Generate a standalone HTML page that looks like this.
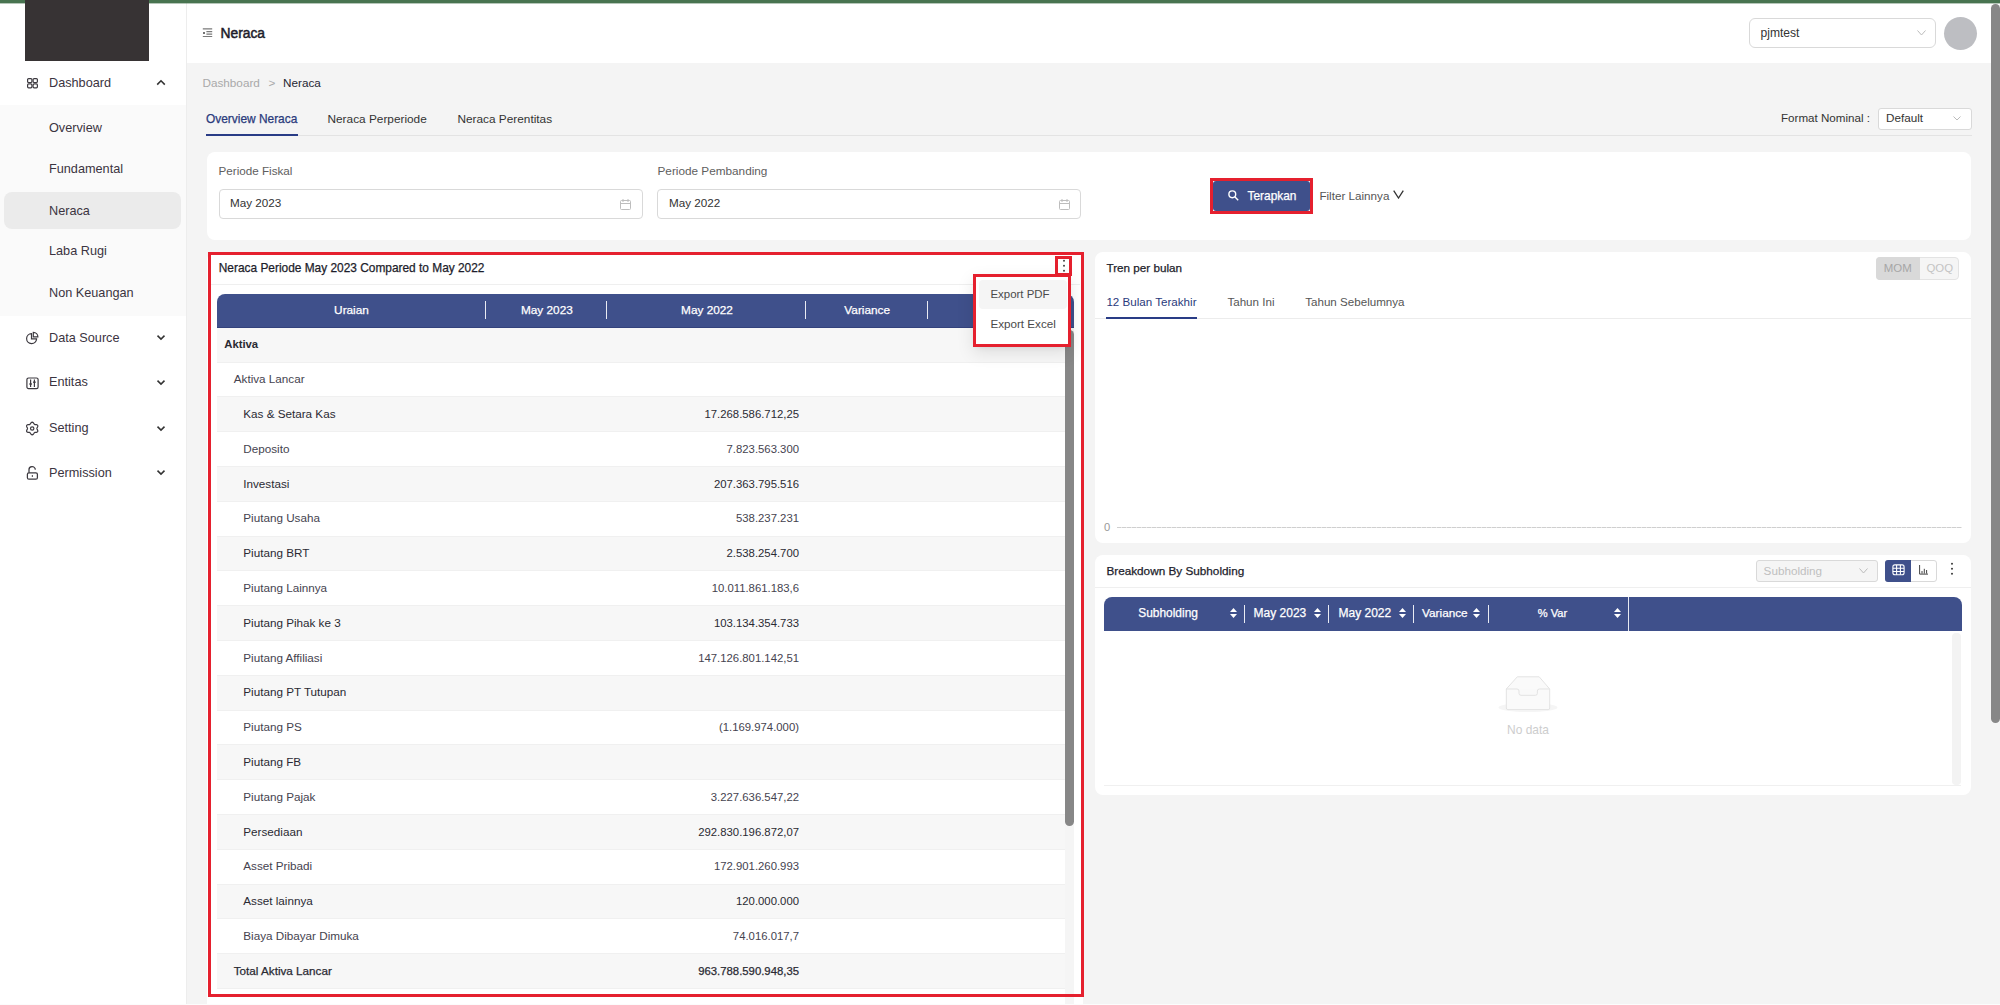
<!DOCTYPE html>
<html><head><meta charset="utf-8">
<style>
*{box-sizing:border-box;margin:0;padding:0}
html,body{width:2000px;height:1005px;overflow:hidden;background:#f4f4f4;font-family:"Liberation Sans",sans-serif;color:#333}
.a{position:absolute}
.t{position:absolute;white-space:nowrap}
.md{-webkit-text-stroke:0.25px currentColor}
</style></head><body>
<div class="a" style="left:0px;top:0px;width:2000px;height:3px;background:#487450"></div>
<div class="a" style="left:0px;top:3px;width:187px;height:1002px;background:#fff;border-right:1px solid #ededed"></div>
<div class="a" style="left:25px;top:0px;width:124px;height:61px;background:#373334"></div>
<div class="a" style="left:0px;top:105px;width:186px;height:211px;background:#fafafa"></div>
<div class="a" style="left:4px;top:192px;width:177px;height:37px;background:#ebebeb;border-radius:8px"></div>
<div class="t " style="left:49px;top:72.50px;font-size:12.7px;color:#3b3441;line-height:20px;height:20px;">Dashboard</div>
<div class="t " style="left:49px;top:118.00px;font-size:12.7px;color:#3b3441;line-height:20px;height:20px;">Overview</div>
<div class="t " style="left:49px;top:158.50px;font-size:12.7px;color:#3b3441;line-height:20px;height:20px;">Fundamental</div>
<div class="t " style="left:49px;top:200.50px;font-size:12.7px;color:#3b3441;line-height:20px;height:20px;">Neraca</div>
<div class="t " style="left:49px;top:241.00px;font-size:12.7px;color:#3b3441;line-height:20px;height:20px;">Laba Rugi</div>
<div class="t " style="left:49px;top:282.50px;font-size:12.7px;color:#3b3441;line-height:20px;height:20px;">Non Keuangan</div>
<div class="t " style="left:49px;top:327.60px;font-size:12.7px;color:#3b3441;line-height:20px;height:20px;">Data Source</div>
<div class="t " style="left:49px;top:372.40px;font-size:12.7px;color:#3b3441;line-height:20px;height:20px;">Entitas</div>
<div class="t " style="left:49px;top:418.20px;font-size:12.7px;color:#3b3441;line-height:20px;height:20px;">Setting</div>
<div class="t " style="left:49px;top:462.90px;font-size:12.7px;color:#3b3441;line-height:20px;height:20px;">Permission</div>
<svg class="a" style="left:26px;top:77px;" width="13" height="12" viewBox="0 0 13 12"><g fill="none" stroke="#3d3a40" stroke-width="1.2"><rect x="1.6" y="1.6" width="4.3" height="3.9" rx="1"/><rect x="7.1" y="1.6" width="4.3" height="3.9" rx="1"/><rect x="1.6" y="6.9" width="4.3" height="3.9" rx="1"/><rect x="7.1" y="6.9" width="4.3" height="3.9" rx="1"/></g></svg>
<svg class="a" style="left:156px;top:79px;" width="10" height="7" viewBox="0 0 10 7"><path d="M1.2 5.6 L5 1.8 L8.8 5.6" fill="none" stroke="#333" stroke-width="1.6"/></svg>
<svg class="a" style="left:156px;top:334px;" width="10" height="7" viewBox="0 0 10 7"><path d="M1.5 1.6 L5 5.1 L8.5 1.6" fill="none" stroke="#333" stroke-width="1.5"/></svg>
<svg class="a" style="left:156px;top:379px;" width="10" height="7" viewBox="0 0 10 7"><path d="M1.5 1.6 L5 5.1 L8.5 1.6" fill="none" stroke="#333" stroke-width="1.5"/></svg>
<svg class="a" style="left:156px;top:425px;" width="10" height="7" viewBox="0 0 10 7"><path d="M1.5 1.6 L5 5.1 L8.5 1.6" fill="none" stroke="#333" stroke-width="1.5"/></svg>
<svg class="a" style="left:156px;top:469px;" width="10" height="7" viewBox="0 0 10 7"><path d="M1.5 1.6 L5 5.1 L8.5 1.6" fill="none" stroke="#333" stroke-width="1.5"/></svg>
<svg class="a" style="left:25px;top:331px;" width="15" height="15" viewBox="0 0 15 15"><g fill="none" stroke="#3d3a40" stroke-width="1.2"><path d="M6.5 2.6 A5 5 0 1 0 11.6 7.9 L6.5 7.9 Z"/><path d="M8.3 1.3 A4.6 4.6 0 0 1 12.9 5.9 L8.3 5.9 Z"/></g></svg>
<svg class="a" style="left:26px;top:377px;" width="13" height="13" viewBox="0 0 13 13"><g fill="none" stroke="#3d3a40" stroke-width="1.2"><rect x="0.9" y="1" width="11.2" height="10.6" rx="1.6"/><path d="M4.6 2.5v7.6M8.4 2.5v7.6"/></g><g fill="#3d3a40"><rect x="3.4" y="6.2" width="2.4" height="1.6"/><rect x="7.2" y="4.4" width="2.4" height="1.6"/></g></svg>
<svg class="a" style="left:25px;top:421px;" width="15" height="15" viewBox="0 0 15 15"><g fill="none" stroke="#3d3a40" stroke-width="1.2" stroke-linejoin="round"><path d="M11.90 7.50 L11.99 7.08 L12.22 6.61 L12.51 6.08 L12.74 5.48 L12.81 4.88 L12.66 4.35 L12.27 3.95 L11.72 3.71 L11.09 3.61 L10.48 3.59 L9.96 3.56 L9.55 3.43 L9.23 3.14 L8.94 2.71 L8.62 2.19 L8.22 1.69 L7.74 1.33 L7.20 1.20 L6.66 1.33 L6.18 1.69 L5.78 2.19 L5.46 2.71 L5.17 3.14 L4.85 3.43 L4.44 3.56 L3.92 3.59 L3.31 3.61 L2.68 3.71 L2.13 3.95 L1.74 4.35 L1.59 4.88 L1.66 5.48 L1.89 6.08 L2.18 6.61 L2.41 7.08 L2.50 7.50 L2.41 7.92 L2.18 8.39 L1.89 8.92 L1.66 9.52 L1.59 10.12 L1.74 10.65 L2.13 11.05 L2.68 11.29 L3.31 11.39 L3.92 11.41 L4.44 11.44 L4.85 11.57 L5.17 11.86 L5.46 12.29 L5.78 12.81 L6.18 13.31 L6.66 13.67 L7.20 13.80 L7.74 13.67 L8.22 13.31 L8.62 12.81 L8.94 12.29 L9.23 11.86 L9.55 11.57 L9.96 11.44 L10.48 11.41 L11.09 11.39 L11.72 11.29 L12.27 11.05 L12.66 10.65 L12.81 10.12 L12.74 9.52 L12.51 8.92 L12.22 8.39 L11.99 7.92 L11.90 7.50Z"/><circle cx="7.2" cy="7.5" r="1.7"/></g></svg>
<svg class="a" style="left:26px;top:466px;" width="13" height="14" viewBox="0 0 13 14"><g fill="none" stroke="#3d3a40" stroke-width="1.25"><rect x="1.4" y="6.8" width="10" height="6.4" rx="1.5"/><path d="M3 6.8 V4.2 A3.2 3.2 0 0 1 9.4 3.6"/><path d="M6.4 9.2v1.6"/></g></svg>
<div class="a" style="left:187px;top:3px;width:1813px;height:60px;background:#fff"></div>
<svg class="a" style="left:202px;top:27px;" width="11" height="11" viewBox="0 0 11 11"><g stroke="#7a7a7a" stroke-width="1.1"><path d="M0.8 1.9h9.4M4.4 4.6h5.8M4.4 7.1h5.8M0.8 9.5h9.4"/></g><circle cx="2" cy="5.9" r="1" fill="#444"/></svg>
<div class="t " style="left:220.5px;top:23.80px;font-size:13.8px;color:#1d1d2b;line-height:20px;height:20px;-webkit-text-stroke:0.5px #1d1d2b">Neraca</div>
<div class="a" style="left:1749px;top:18px;width:187px;height:30px;background:#fff;border:1px solid #d9d9d9;border-radius:6px"></div>
<div class="t " style="left:1760.5px;top:23.00px;font-size:12.1px;color:#333;line-height:20px;height:20px;">pjmtest</div>
<svg class="a" style="left:1917px;top:30px;" width="9" height="6" viewBox="0 0 9 6"><path d="M0.5 0.5 L4.5 5 L8.5 0.5" fill="none" stroke="#bbb" stroke-width="1"/></svg>
<div class="a" style="left:1944px;top:17px;width:33px;height:33px;background:#bdbec2;border-radius:50%"></div>
<div class="a" style="left:1990px;top:63px;width:10px;height:942px;background:#f4f4f4"></div>
<div class="a" style="left:1991px;top:4px;width:9px;height:719px;background:#878787;border-radius:5px"></div>
<div class="t " style="left:202.5px;top:73.00px;font-size:11.73px;color:#a9a9a9;line-height:20px;height:20px;">Dashboard</div>
<div class="t " style="left:268.5px;top:73.00px;font-size:11.73px;color:#a9a9a9;line-height:20px;height:20px;">&gt;</div>
<div class="t " style="left:283px;top:73.00px;font-size:11.73px;color:#262633;line-height:20px;height:20px;">Neraca</div>
<div class="a" style="left:206px;top:135px;width:1766px;height:1px;background:#e3e3e3"></div>
<div class="t md" style="left:206px;top:108.80px;font-size:11.92px;color:#2a3a7c;line-height:20px;height:20px;">Overview Neraca</div>
<div class="a" style="left:206px;top:134px;width:92px;height:2px;background:#293c86"></div>
<div class="t " style="left:327.5px;top:108.80px;font-size:11.83px;color:#333;line-height:20px;height:20px;">Neraca Perperiode</div>
<div class="t " style="left:457.5px;top:108.80px;font-size:11.82px;color:#333;line-height:20px;height:20px;">Neraca Perentitas</div>
<div class="t " style="right:130px;top:107.90px;font-size:11.61px;color:#333;line-height:20px;height:20px;">Format Nominal :</div>
<div class="a" style="left:1878px;top:108px;width:94px;height:22px;background:#fff;border:1px solid #d9d9d9;border-radius:3px"></div>
<div class="t " style="left:1886px;top:108.40px;font-size:11.7px;color:#333;line-height:20px;height:20px;">Default</div>
<svg class="a" style="left:1953px;top:116px;" width="8" height="5" viewBox="0 0 8 5"><path d="M0.5 0.5 L4 4 L7.5 0.5" fill="none" stroke="#bbb" stroke-width="1"/></svg>
<div class="a" style="left:207px;top:152px;width:1764px;height:88px;background:#fff;border-radius:8px"></div>
<div class="t " style="left:218.5px;top:160.80px;font-size:11.68px;color:#5e5e5e;line-height:20px;height:20px;">Periode Fiskal</div>
<div class="t " style="left:657.5px;top:160.80px;font-size:11.78px;color:#5e5e5e;line-height:20px;height:20px;">Periode Pembanding</div>
<div class="a" style="left:219px;top:189px;width:424px;height:30px;background:#fff;border:1px solid #d9d9d9;border-radius:4px"></div>
<div class="a" style="left:657px;top:189px;width:424px;height:30px;background:#fff;border:1px solid #d9d9d9;border-radius:4px"></div>
<div class="t " style="left:230px;top:193.20px;font-size:11.7px;color:#333;line-height:20px;height:20px;">May 2023</div>
<div class="t " style="left:669px;top:193.20px;font-size:11.7px;color:#333;line-height:20px;height:20px;">May 2022</div>
<svg class="a" style="left:620px;top:199px;" width="11" height="11" viewBox="0 0 11 11"><g fill="none" stroke="#bdbdbd" stroke-width="1"><rect x="0.5" y="1.5" width="10" height="9" rx="1"/><path d="M0.5 4.5h10M3 0v3M8 0v3"/></g></svg>
<svg class="a" style="left:1059px;top:199px;" width="11" height="11" viewBox="0 0 11 11"><g fill="none" stroke="#bdbdbd" stroke-width="1"><rect x="0.5" y="1.5" width="10" height="9" rx="1"/><path d="M0.5 4.5h10M3 0v3M8 0v3"/></g></svg>
<div class="a" style="left:1210px;top:178px;width:103px;height:36px;border:3px solid #e5202e"></div>
<div class="a" style="left:1213px;top:181px;width:97px;height:30px;background:#3f508b;border-radius:3px"></div>
<svg class="a" style="left:1228px;top:190px;" width="11" height="11" viewBox="0 0 11 11"><g fill="none" stroke="#fff" stroke-width="1.4"><circle cx="4.3" cy="4.3" r="3.4"/><path d="M6.8 6.8 L10.2 10.2"/></g></svg>
<div class="t md" style="left:1247.5px;top:185.50px;font-size:11.91px;color:#fff;line-height:20px;height:20px;">Terapkan</div>
<div class="t " style="left:1319.4px;top:185.50px;font-size:11.66px;color:#555;line-height:20px;height:20px;">Filter Lainnya</div>
<svg class="a" style="left:1393px;top:190px;" width="11" height="9" viewBox="0 0 11 9"><path d="M0.7 0.7 L5.5 8 L10.3 0.7" fill="none" stroke="#333" stroke-width="1.3"/></svg>
<div class="a" style="left:207px;top:252px;width:876px;height:753px;background:#fff;border-radius:8px 8px 0 0"></div>
<div class="t md" style="left:218.75px;top:257.50px;font-size:11.9px;color:#1d1d2b;line-height:20px;height:20px;">Neraca Periode May 2023 Compared to May 2022</div>
<div class="a" style="left:211px;top:284px;width:869px;height:1px;background:#efefef"></div>
<div class="a" style="left:217px;top:294px;width:857px;height:34px;background:#3f508b;border-radius:8px 8px 0 0;border-bottom:1px solid #33427c"></div>
<div class="t md" style="left:251.50px;width:200px;text-align:center;top:300.00px;font-size:11.8px;color:#fff;line-height:20px;height:20px;">Uraian</div>
<div class="t md" style="left:446.90px;width:200px;text-align:center;top:300.00px;font-size:11.8px;color:#fff;line-height:20px;height:20px;">May 2023</div>
<div class="t md" style="left:607.00px;width:200px;text-align:center;top:300.00px;font-size:11.8px;color:#fff;line-height:20px;height:20px;">May 2022</div>
<div class="t md" style="left:767.20px;width:200px;text-align:center;top:300.00px;font-size:11.8px;color:#fff;line-height:20px;height:20px;">Variance</div>
<div class="a" style="left:485px;top:301px;width:1px;height:18px;background:#e9ebf3"></div>
<div class="a" style="left:606px;top:301px;width:1px;height:18px;background:#e9ebf3"></div>
<div class="a" style="left:805px;top:301px;width:1px;height:18px;background:#e9ebf3"></div>
<div class="a" style="left:927px;top:301px;width:1px;height:18px;background:#e9ebf3"></div>
<div class="a" style="left:217px;top:327.80px;width:847.5px;height:34.80px;background:#f7f7f7;border-bottom:1px solid #f0f0f0"></div>
<div class="a" style="left:217px;top:362.60px;width:847.5px;height:34.80px;background:#fff;border-bottom:1px solid #f0f0f0"></div>
<div class="a" style="left:217px;top:397.40px;width:847.5px;height:34.80px;background:#f7f7f7;border-bottom:1px solid #f0f0f0"></div>
<div class="a" style="left:217px;top:432.20px;width:847.5px;height:34.80px;background:#fff;border-bottom:1px solid #f0f0f0"></div>
<div class="a" style="left:217px;top:467.00px;width:847.5px;height:34.80px;background:#f7f7f7;border-bottom:1px solid #f0f0f0"></div>
<div class="a" style="left:217px;top:501.80px;width:847.5px;height:34.80px;background:#fff;border-bottom:1px solid #f0f0f0"></div>
<div class="a" style="left:217px;top:536.60px;width:847.5px;height:34.80px;background:#f7f7f7;border-bottom:1px solid #f0f0f0"></div>
<div class="a" style="left:217px;top:571.40px;width:847.5px;height:34.80px;background:#fff;border-bottom:1px solid #f0f0f0"></div>
<div class="a" style="left:217px;top:606.20px;width:847.5px;height:34.80px;background:#f7f7f7;border-bottom:1px solid #f0f0f0"></div>
<div class="a" style="left:217px;top:641.00px;width:847.5px;height:34.80px;background:#fff;border-bottom:1px solid #f0f0f0"></div>
<div class="a" style="left:217px;top:675.80px;width:847.5px;height:34.80px;background:#f7f7f7;border-bottom:1px solid #f0f0f0"></div>
<div class="a" style="left:217px;top:710.60px;width:847.5px;height:34.80px;background:#fff;border-bottom:1px solid #f0f0f0"></div>
<div class="a" style="left:217px;top:745.40px;width:847.5px;height:34.80px;background:#f7f7f7;border-bottom:1px solid #f0f0f0"></div>
<div class="a" style="left:217px;top:780.20px;width:847.5px;height:34.80px;background:#fff;border-bottom:1px solid #f0f0f0"></div>
<div class="a" style="left:217px;top:815.00px;width:847.5px;height:34.80px;background:#f7f7f7;border-bottom:1px solid #f0f0f0"></div>
<div class="a" style="left:217px;top:849.80px;width:847.5px;height:34.80px;background:#fff;border-bottom:1px solid #f0f0f0"></div>
<div class="a" style="left:217px;top:884.60px;width:847.5px;height:34.80px;background:#f7f7f7;border-bottom:1px solid #f0f0f0"></div>
<div class="a" style="left:217px;top:919.40px;width:847.5px;height:34.80px;background:#fff;border-bottom:1px solid #f0f0f0"></div>
<div class="a" style="left:217px;top:954.20px;width:847.5px;height:34.80px;background:#f7f7f7;border-bottom:1px solid #f0f0f0"></div>
<div class="t " style="left:224.25px;top:334.40px;font-size:11.3px;color:#2a2a33;line-height:20px;height:20px;font-weight:bold">Aktiva</div>
<div class="t " style="left:233.75px;top:369.20px;font-size:11.7px;color:#45434f;line-height:20px;height:20px;">Aktiva Lancar</div>
<div class="t " style="left:243.25px;top:404.00px;font-size:11.7px;color:#2a2a33;line-height:20px;height:20px;">Kas &amp; Setara Kas</div>
<div class="t " style="right:1201px;top:404.00px;font-size:11.33px;color:#2a2a33;line-height:20px;height:20px;">17.268.586.712,25</div>
<div class="t " style="left:243.25px;top:438.80px;font-size:11.7px;color:#45434f;line-height:20px;height:20px;">Deposito</div>
<div class="t " style="right:1201px;top:438.80px;font-size:11.33px;color:#45434f;line-height:20px;height:20px;">7.823.563.300</div>
<div class="t " style="left:243.25px;top:473.60px;font-size:11.7px;color:#2a2a33;line-height:20px;height:20px;">Investasi</div>
<div class="t " style="right:1201px;top:473.60px;font-size:11.33px;color:#2a2a33;line-height:20px;height:20px;">207.363.795.516</div>
<div class="t " style="left:243.25px;top:508.40px;font-size:11.7px;color:#45434f;line-height:20px;height:20px;">Piutang Usaha</div>
<div class="t " style="right:1201px;top:508.40px;font-size:11.33px;color:#45434f;line-height:20px;height:20px;">538.237.231</div>
<div class="t " style="left:243.25px;top:543.20px;font-size:11.7px;color:#2a2a33;line-height:20px;height:20px;">Piutang BRT</div>
<div class="t " style="right:1201px;top:543.20px;font-size:11.33px;color:#2a2a33;line-height:20px;height:20px;">2.538.254.700</div>
<div class="t " style="left:243.25px;top:578.00px;font-size:11.7px;color:#45434f;line-height:20px;height:20px;">Piutang Lainnya</div>
<div class="t " style="right:1201px;top:578.00px;font-size:11.33px;color:#45434f;line-height:20px;height:20px;">10.011.861.183,6</div>
<div class="t " style="left:243.25px;top:612.80px;font-size:11.7px;color:#2a2a33;line-height:20px;height:20px;">Piutang Pihak ke 3</div>
<div class="t " style="right:1201px;top:612.80px;font-size:11.33px;color:#2a2a33;line-height:20px;height:20px;">103.134.354.733</div>
<div class="t " style="left:243.25px;top:647.60px;font-size:11.7px;color:#45434f;line-height:20px;height:20px;">Piutang Affiliasi</div>
<div class="t " style="right:1201px;top:647.60px;font-size:11.33px;color:#45434f;line-height:20px;height:20px;">147.126.801.142,51</div>
<div class="t " style="left:243.25px;top:682.40px;font-size:11.7px;color:#2a2a33;line-height:20px;height:20px;">Piutang PT Tutupan</div>
<div class="t " style="left:243.25px;top:717.20px;font-size:11.7px;color:#45434f;line-height:20px;height:20px;">Piutang PS</div>
<div class="t " style="right:1201px;top:717.20px;font-size:11.33px;color:#45434f;line-height:20px;height:20px;">(1.169.974.000)</div>
<div class="t " style="left:243.25px;top:752.00px;font-size:11.7px;color:#2a2a33;line-height:20px;height:20px;">Piutang FB</div>
<div class="t " style="left:243.25px;top:786.80px;font-size:11.7px;color:#45434f;line-height:20px;height:20px;">Piutang Pajak</div>
<div class="t " style="right:1201px;top:786.80px;font-size:11.33px;color:#45434f;line-height:20px;height:20px;">3.227.636.547,22</div>
<div class="t " style="left:243.25px;top:821.60px;font-size:11.7px;color:#2a2a33;line-height:20px;height:20px;">Persediaan</div>
<div class="t " style="right:1201px;top:821.60px;font-size:11.33px;color:#2a2a33;line-height:20px;height:20px;">292.830.196.872,07</div>
<div class="t " style="left:243.25px;top:856.40px;font-size:11.7px;color:#45434f;line-height:20px;height:20px;">Asset Pribadi</div>
<div class="t " style="right:1201px;top:856.40px;font-size:11.33px;color:#45434f;line-height:20px;height:20px;">172.901.260.993</div>
<div class="t " style="left:243.25px;top:891.20px;font-size:11.7px;color:#2a2a33;line-height:20px;height:20px;">Asset lainnya</div>
<div class="t " style="right:1201px;top:891.20px;font-size:11.33px;color:#2a2a33;line-height:20px;height:20px;">120.000.000</div>
<div class="t " style="left:243.25px;top:926.00px;font-size:11.7px;color:#45434f;line-height:20px;height:20px;">Biaya Dibayar Dimuka</div>
<div class="t " style="right:1201px;top:926.00px;font-size:11.33px;color:#45434f;line-height:20px;height:20px;">74.016.017,7</div>
<div class="t md" style="left:233.75px;top:960.80px;font-size:11.7px;color:#2a2a33;line-height:20px;height:20px;">Total Aktiva Lancar</div>
<div class="t md" style="right:1201px;top:960.80px;font-size:11.33px;color:#2a2a33;line-height:20px;height:20px;">963.788.590.948,35</div>
<div class="a" style="left:1064.5px;top:328px;width:9.5px;height:677px;background:#f5f5f5"></div>
<div class="a" style="left:1065px;top:330px;width:9px;height:496px;background:#878787;border-radius:5px"></div>
<div class="a" style="left:207.5px;top:251.5px;width:876.0px;height:745.0px;border:3px solid #e5202e"></div>
<div class="a" style="left:1055px;top:256px;width:17px;height:20px;border:3px solid #e5202e"></div>
<svg class="a" style="left:1062px;top:259px;" width="4" height="14" viewBox="0 0 4 14"><circle cx="2" cy="1.8" r="1" fill="#444"/><circle cx="2" cy="6.8" r="1" fill="#444"/><circle cx="2" cy="11.8" r="1" fill="#444"/></svg>
<div class="a" style="left:973px;top:274px;width:98px;height:73px;background:#fff;box-shadow:0 6px 16px 0 rgba(0,0,0,0.10),0 3px 6px -4px rgba(0,0,0,0.12)"></div>
<div class="a" style="left:979px;top:279.5px;width:87.5px;height:29.5px;background:#f5f5f5;border-radius:4px"></div>
<div class="t " style="left:990.4px;top:283.50px;font-size:11.46px;color:#4a4a4a;line-height:20px;height:20px;">Export PDF</div>
<div class="t " style="left:990.4px;top:313.50px;font-size:11.67px;color:#4a4a4a;line-height:20px;height:20px;">Export Excel</div>
<div class="a" style="left:972.5px;top:273.5px;width:98.5px;height:73.0px;border:3px solid #e5202e"></div>
<div class="a" style="left:1095px;top:252px;width:876px;height:291px;background:#fff;border-radius:8px"></div>
<div class="t md" style="left:1106.5px;top:257.70px;font-size:11.68px;color:#1d1d2b;line-height:20px;height:20px;">Tren per bulan</div>
<div class="a" style="left:1876px;top:257px;width:83px;height:23px;background:#f5f5f5;border:1px solid #e3e3e3;border-radius:4px"></div>
<div class="a" style="left:1876px;top:257px;width:44px;height:23px;background:#d9d9d9;border-radius:4px 0 0 4px"></div>
<div class="t " style="left:1883.7px;top:257.50px;font-size:11.46px;color:#a6a6a6;line-height:20px;height:20px;">MOM</div>
<div class="t " style="left:1926.5px;top:257.50px;font-size:11.4px;color:#c4c4c4;line-height:20px;height:20px;">QOQ</div>
<div class="a" style="left:1095px;top:318px;width:876px;height:1px;background:#ececec"></div>
<div class="t " style="left:1106.4px;top:291.50px;font-size:11.62px;color:#2a3a7c;line-height:20px;height:20px;">12 Bulan Terakhir</div>
<div class="a" style="left:1106px;top:317px;width:91px;height:2px;background:#293c86"></div>
<div class="t " style="left:1227.4px;top:291.50px;font-size:11.62px;color:#555;line-height:20px;height:20px;">Tahun Ini</div>
<div class="t " style="left:1305.2px;top:291.50px;font-size:11.62px;color:#555;line-height:20px;height:20px;">Tahun Sebelumnya</div>
<div class="t " style="left:1104px;top:517.20px;font-size:11.2px;color:#999;line-height:20px;height:20px;">0</div>
<div class="a" style="left:1117px;top:527px;width:845px;height:1px;background:repeating-linear-gradient(90deg,#cfcfcf 0 4px,#e8e8e8 4px 5px)"></div>
<div class="a" style="left:1095px;top:555px;width:876px;height:240px;background:#fff;border-radius:8px"></div>
<div class="t md" style="left:1106.4px;top:560.60px;font-size:11.75px;color:#1d1d2b;line-height:20px;height:20px;">Breakdown By Subholding</div>
<div class="a" style="left:1095px;top:587px;width:876px;height:1px;background:#efefef"></div>
<div class="a" style="left:1756px;top:560px;width:122px;height:22px;background:#f5f5f5;border:1px solid #d9d9d9;border-radius:3px"></div>
<div class="t " style="left:1763.6px;top:561.00px;font-size:11.7px;color:#bfbfbf;line-height:20px;height:20px;">Subholding</div>
<svg class="a" style="left:1859px;top:568px;" width="9" height="6" viewBox="0 0 9 6"><path d="M0.5 0.5 L4.5 5 L8.5 0.5" fill="none" stroke="#bbb" stroke-width="1"/></svg>
<div class="a" style="left:1885px;top:560px;width:52px;height:22px;background:#fff;border:1px solid #d9d9d9;border-radius:3px"></div>
<div class="a" style="left:1885px;top:560px;width:26px;height:22px;background:#3f508b;border-radius:3px 0 0 3px"></div>
<svg class="a" style="left:1892px;top:564px;" width="13" height="12" viewBox="0 0 13 12"><g fill="none" stroke="#fff" stroke-width="1.1"><rect x="0.9" y="0.9" width="11.2" height="9.8" rx="2"/><path d="M0.9 4.2h11.2M0.9 7.5h11.2M4.6 0.9v9.8M8.4 0.9v9.8"/></g></svg>
<svg class="a" style="left:1919px;top:565px;" width="10" height="10" viewBox="0 0 10 10"><g fill="none" stroke="#444" stroke-width="1"><path d="M0.6 0v9.1H9"/><path d="M3 8.6V6M5.3 8.6V3.8M7.6 8.6V5"/></g></svg>
<svg class="a" style="left:1950px;top:562px;" width="4" height="14" viewBox="0 0 4 14"><circle cx="2" cy="1.8" r="1.05" fill="#444"/><circle cx="2" cy="6.8" r="1.05" fill="#444"/><circle cx="2" cy="11.8" r="1.05" fill="#444"/></svg>
<div class="a" style="left:1104px;top:596.5px;width:857.5px;height:34.0px;background:#3f508b;border-radius:8px 8px 0 0"></div>
<div class="t md" style="left:1138.2px;top:603.30px;font-size:11.95px;color:#fff;line-height:20px;height:20px;">Subholding</div>
<svg class="a" style="left:1229.5px;top:608px;" width="7" height="10" viewBox="0 0 7 10"><path d="M3.5 0 L7 4 H0 Z M0 6 H7 L3.5 10 Z" fill="#fff"/></svg>
<div class="a" style="left:1244px;top:605px;width:1px;height:18px;background:#e9ebf3"></div>
<div class="t md" style="left:1253.6px;top:603.30px;font-size:12.0px;color:#fff;line-height:20px;height:20px;">May 2023</div>
<svg class="a" style="left:1314px;top:608px;" width="7" height="10" viewBox="0 0 7 10"><path d="M3.5 0 L7 4 H0 Z M0 6 H7 L3.5 10 Z" fill="#fff"/></svg>
<div class="a" style="left:1328px;top:605px;width:1px;height:18px;background:#e9ebf3"></div>
<div class="t md" style="left:1338.5px;top:603.30px;font-size:12.0px;color:#fff;line-height:20px;height:20px;">May 2022</div>
<svg class="a" style="left:1398.5px;top:608px;" width="7" height="10" viewBox="0 0 7 10"><path d="M3.5 0 L7 4 H0 Z M0 6 H7 L3.5 10 Z" fill="#fff"/></svg>
<div class="a" style="left:1413px;top:605px;width:1px;height:18px;background:#e9ebf3"></div>
<div class="t md" style="left:1422.1px;top:603.30px;font-size:11.78px;color:#fff;line-height:20px;height:20px;">Variance</div>
<svg class="a" style="left:1473.4px;top:608px;" width="7" height="10" viewBox="0 0 7 10"><path d="M3.5 0 L7 4 H0 Z M0 6 H7 L3.5 10 Z" fill="#fff"/></svg>
<div class="a" style="left:1488px;top:605px;width:1px;height:18px;background:#e9ebf3"></div>
<div class="t md" style="left:1537.7px;top:603.30px;font-size:11.14px;color:#fff;line-height:20px;height:20px;">% Var</div>
<svg class="a" style="left:1613.7px;top:608px;" width="7" height="10" viewBox="0 0 7 10"><path d="M3.5 0 L7 4 H0 Z M0 6 H7 L3.5 10 Z" fill="#fff"/></svg>
<div class="a" style="left:1628px;top:596.5px;width:1px;height:34.0px;background:#e8eaf2"></div>
<div class="a" style="left:1952px;top:633px;width:9px;height:152px;background:#f3f3f3;border-radius:4px"></div>
<div class="a" style="left:1104px;top:785px;width:857px;height:1px;background:#f0f0f0"></div>
<svg class="a" style="left:1498px;top:676px;" width="60" height="39" viewBox="0 0 60 39"><ellipse cx="30" cy="31.5" rx="29.5" ry="4.6" fill="#f5f5f5"/><g fill="#fafafa" stroke="#e3e3e3" stroke-width="1"><path d="M8.3 13 L19.3 0.8 H41.2 L51.7 13 V32 a1.6 1.6 0 0 1 -1.6 1.6 H9.9 a1.6 1.6 0 0 1 -1.6 -1.6 Z"/><path d="M8.3 13 H19 a2 2 0 0 1 2 2 V17.3 a2 2 0 0 0 2 2 H37.4 a2 2 0 0 0 2 -2 V15 a2 2 0 0 1 2 -2 H51.7" fill="#f9f9f9"/></g></svg>
<div class="t " style="left:1428.00px;width:200px;text-align:center;top:720.00px;font-size:11.94px;color:#cdcdcd;line-height:20px;height:20px;">No data</div>
<div class="a" style="left:0px;top:1004px;width:2000px;height:1px;background:#fcfcfc"></div>
<div class="a" style="left:0px;top:3px;width:25px;height:1px;background:rgba(72,116,80,0.4)"></div>
<div class="a" style="left:149px;top:3px;width:1851px;height:1px;background:rgba(72,116,80,0.4)"></div>
</body></html>
